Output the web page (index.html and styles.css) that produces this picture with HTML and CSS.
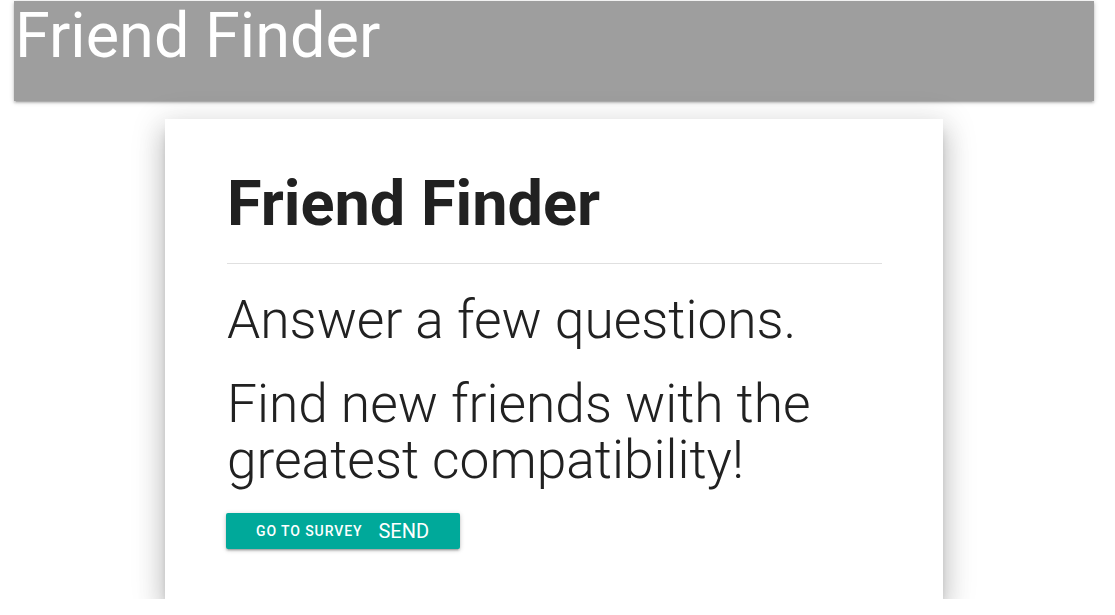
FILE: index.html
```html
<!DOCTYPE html>
<html>
<head>
<meta charset="utf-8">
<link rel="stylesheet" href="styles.css">
</head>
<body>
<header class="topbar">
  <h1 class="brand">Friend Finder</h1>
</header>
<main class="card">
  <h2 class="card-title">Friend Finder</h2>
  <hr class="divider">
  <p class="lead">Answer a few questions.</p>
  <p class="lead">Find new friends with the greatest compatibility!</p>
  <a class="btn" href="#">Go to Survey <span class="icon">send</span></a>
</main>
</body>
</html>
```
FILE: styles.css
```css
html, body {
  margin: 0;
  padding: 0;
  background: #fff;
  font-family: Roboto, "Liberation Sans", sans-serif;
  color: #212121;
}
.topbar {
  margin: 1px 21px 0 14px;
  height: 100px;
  background: #9e9e9e;
  box-shadow: 0 2px 2px 0 rgba(0,0,0,.14), 0 3px 1px -2px rgba(0,0,0,.12), 0 1px 5px 0 rgba(0,0,0,.2);
}
.brand {
  margin: 0;
  padding-left: 1px;
  font-size: 63px;
  font-weight: 400;
  line-height: 70px;
  color: #fff;
}
.card {
  display: block;
  box-sizing: border-box;
  width: 778px;
  height: 480px;
  margin: 18px 0 0 165px;
  padding: 50px 61px 0 62px;
  background: #fff;
  box-shadow: 0 16px 24px 2px rgba(0,0,0,.14), 0 6px 30px 5px rgba(0,0,0,.12), 0 8px 10px -5px rgba(0,0,0,.3);
}
.card-title {
  margin: 0;
  font-size: 63px;
  font-weight: 700;
  line-height: 70px;
}
.divider {
  margin: 24px 0 0;
  border: 0;
  border-top: 1px solid #e0e0e0;
}
.lead {
  margin: 28px 0 0;
  font-size: 53.3px;
  font-weight: 300;
  line-height: 56px;
}
.btn {
  display: inline-flex;
  align-items: center;
  gap: 16px;
  box-sizing: border-box;
  width: 234px;
  height: 36px;
  margin: 25px 0 0 -1px;
  padding: 0 30px;
  background: #00a99a;
  color: #fff;
  text-decoration: none;
  text-transform: uppercase;
  font-size: 14px;
  font-weight: 500;
  letter-spacing: 0.9px;
  border-radius: 2px;
  box-shadow: 0 2px 2px 0 rgba(0,0,0,.14), 0 3px 1px -2px rgba(0,0,0,.12), 0 1px 5px 0 rgba(0,0,0,.2);
}
.icon {
  font-size: 20px;
  font-weight: 400;
  letter-spacing: 0;
}
```
